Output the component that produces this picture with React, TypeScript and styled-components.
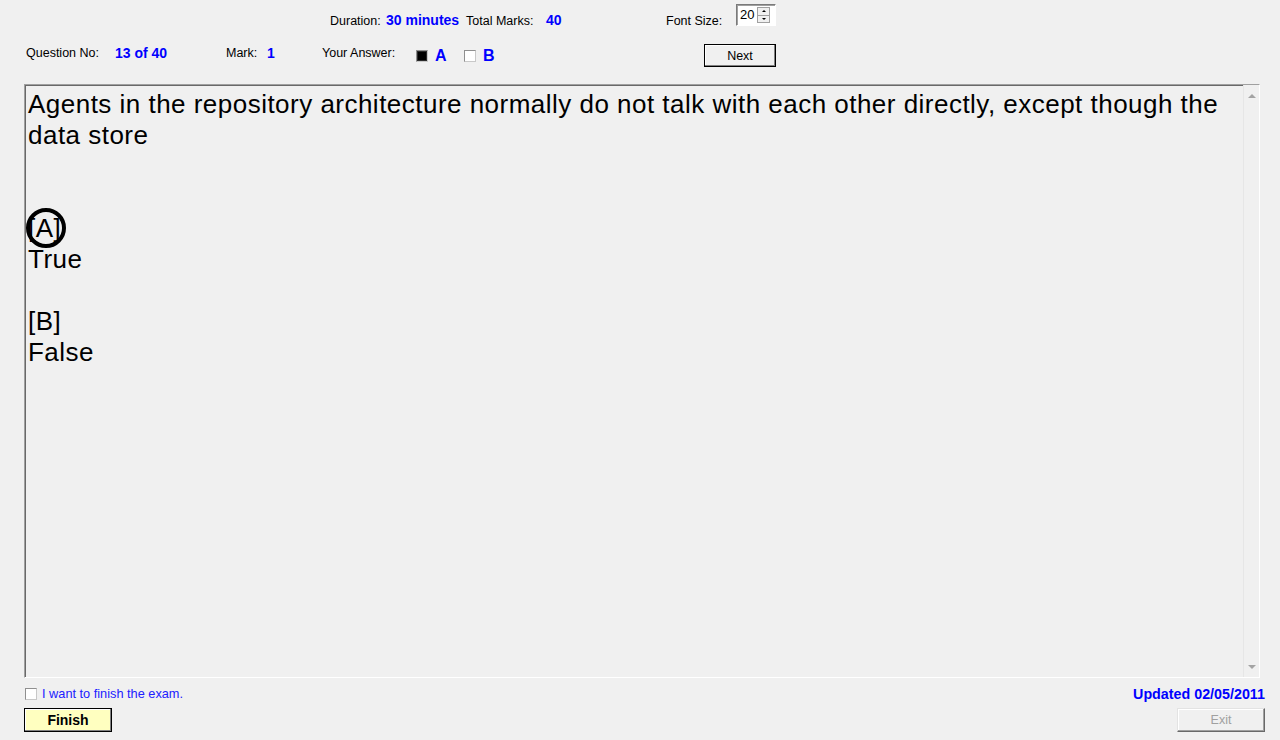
import React from 'react';
import styled, { createGlobalStyle } from 'styled-components';

const Global = createGlobalStyle`
  html, body { margin: 0; padding: 0; background: #f0f0f0; }
  body { font-family: "Liberation Sans", Arial, sans-serif; color: #000; }
`;

const Window = styled.div`
  width: 1280px;
  height: 740px;
  background: #f0f0f0;
  display: flex;
  flex-direction: column;
  overflow: hidden;
`;

const HeaderRow = styled.div<{ $top: number; $left: number; $h: number }>`
  display: flex;
  align-items: flex-start;
  margin-top: ${p => p.$top}px;
  padding-left: ${p => p.$left}px;
  height: ${p => p.$h}px;
`;

const Label = styled.div<{ $w?: number; $pt?: number }>`
  ${p => (p.$w ? `width: ${p.$w}px;` : '')}
  flex: none;
  padding-top: ${p => p.$pt ?? 0}px;
  font-size: 12.5px;
  line-height: 14px;
  white-space: nowrap;
  color: #000;
`;

const Value = styled.div<{ $w?: number; $pt?: number; $size?: number }>`
  ${p => (p.$w ? `width: ${p.$w}px;` : '')}
  flex: none;
  padding-top: ${p => p.$pt ?? 0}px;
  font-size: ${p => p.$size ?? 14}px;
  line-height: 16px;
  font-weight: bold;
  white-space: nowrap;
  color: #0000ff;
`;

const CheckBox = styled.div<{ $checked?: boolean; $mt?: number; $mr?: number; $ml?: number }>`
  flex: none;
  box-sizing: border-box;
  width: 12px;
  height: 12px;
  margin-top: ${p => p.$mt ?? 0}px;
  margin-right: ${p => p.$mr ?? 0}px;
  margin-left: ${p => p.$ml ?? 0}px;
  border: 1px solid #8f8f8f;
  border-bottom-color: #c8c8c8;
  border-right-color: #c8c8c8;
  background: ${p => (p.$checked ? '#000' : '#fff')};
  box-shadow: ${p => (p.$checked ? 'inset 0 0 0 1px #2a2a2a' : 'none')};
`;

const Spinner = styled.div`
  flex: none;
  box-sizing: border-box;
  width: 40px;
  height: 22px;
  display: flex;
  align-items: stretch;
  background: #fff;
  border-top: 1px solid #7a7a7a;
  border-left: 1px solid #7a7a7a;
  border-right: 1px solid #ffffff;
  border-bottom: 1px solid #ffffff;
  box-shadow: inset 1px 1px 0 #a0a0a0;
  padding: 2px 5px 2px 2px;
`;

const SpinnerText = styled.div`
  flex: 1;
  font-size: 13px;
  line-height: 16px;
  padding-left: 1px;
`;

const SpinnerButtons = styled.div`
  width: 13px;
  display: flex;
  flex-direction: column;
  border: 1px solid #a0a0a0;
  box-sizing: border-box;
`;

const SpinButton = styled.div<{ $top?: boolean }>`
  flex: 1;
  box-sizing: border-box;
  background: #f0f0f0;
  ${p => (p.$top ? 'border-bottom: 1px solid #a0a0a0;' : '')}
  display: flex;
  align-items: center;
  justify-content: center;
`;

const Arrow = styled.div<{ $dir: 'up' | 'down'; $color?: string; $size?: number }>`
  width: 0;
  height: 0;
  border-left: ${p => p.$size ?? 2}px solid transparent;
  border-right: ${p => p.$size ?? 2}px solid transparent;
  ${p =>
    p.$dir === 'up'
      ? `border-bottom: ${(p.$size ?? 2)}px solid ${p.$color ?? '#000'};`
      : `border-top: ${(p.$size ?? 2)}px solid ${p.$color ?? '#000'};`}
`;

const PushButton = styled.div<{ $w: number; $h: number; $bg?: string; $bold?: boolean; $disabled?: boolean; $size?: number }>`
  flex: none;
  box-sizing: border-box;
  width: ${p => p.$w}px;
  height: ${p => p.$h}px;
  display: flex;
  align-items: center;
  justify-content: center;
  background: ${p => p.$bg ?? '#f0f0f0'};
  font-size: ${p => p.$size ?? 12.5}px;
  font-weight: ${p => (p.$bold ? 'bold' : 'normal')};
  color: ${p => (p.$disabled ? '#a0a0a0' : '#000')};
  ${p =>
    p.$disabled
      ? `border-top: 1px solid #e3e3e3; border-left: 1px solid #e3e3e3;
         border-right: 1px solid #696969; border-bottom: 1px solid #696969;
         box-shadow: inset -1px -1px 0 #a0a0a0, inset 1px 1px 0 #fff;`
      : `border: 1px solid #000;
         box-shadow: inset -1px -1px 0 #808080, inset 1px 1px 0 #fff;`}
`;

const QuestionPanel = styled.div`
  flex: none;
  box-sizing: border-box;
  margin: 17px 0 0 24px;
  width: 1236px;
  height: 594px;
  display: flex;
  border-top: 1px solid #a0a0a0;
  border-left: 1px solid #a0a0a0;
  border-right: 1px solid #fff;
  border-bottom: 1px solid #fff;
  box-shadow: inset 1px 1px 0 #696969;
`;

const QuestionText = styled.div`
  flex: 1;
  padding: 4px 0 0 3px;
  font-size: 26px;
  letter-spacing: 0.48px;
  line-height: 31px;
  color: #000;
`;

const Line = styled.div`
  min-height: 31px;
  white-space: nowrap;
`;

const Choice = styled.span`
  position: relative;
  display: inline-block;
`;

const AnswerRing = styled.span`
  position: absolute;
  left: -2px;
  top: -5px;
  width: 40px;
  height: 40px;
  box-sizing: border-box;
  border: 4px solid #000;
  border-radius: 50%;
`;

const ScrollBar = styled.div`
  width: 15px;
  flex: none;
  display: flex;
  flex-direction: column;
  justify-content: space-between;
  align-items: center;
  border-left: 1px solid #e6e6e6;
  background: #f0f0f0;
  padding: 9px 0 8px;
`;

const BottomBar = styled.div`
  display: flex;
  justify-content: space-between;
  margin-top: 8px;
  padding: 0 15px 0 24px;
`;

const BottomLeft = styled.div`
  display: flex;
  flex-direction: column;
  align-items: flex-start;
  padding-top: 1px;
`;

const FinishRow = styled.div`
  display: flex;
  align-items: flex-start;
  height: 14px;
`;

const FinishLabel = styled.div`
  font-size: 12.75px;
  line-height: 14px;
  color: #2020ff;
  white-space: nowrap;
`;

const BottomRight = styled.div`
  display: flex;
  flex-direction: column;
  align-items: flex-end;
`;

const UpdatedText = styled(Value)`
  font-size: 14.3px;
`;

const ButtonSlot = styled.div<{ $mt: number }>`
  margin-top: ${p => p.$mt}px;
`;

export default function App() {
  return (
    <Window>
      <Global />
      <HeaderRow $top={4} $left={330} $h={22}>
        <Label $w={56} $pt={10}>Duration:</Label>
        <Value $w={80} $pt={8}>30 minutes</Value>
        <Label $w={80} $pt={10}>Total Marks:</Label>
        <Value $w={120} $pt={8}>40</Value>
        <Label $w={70} $pt={10}>Font Size:</Label>
        <Spinner>
          <SpinnerText>20</SpinnerText>
          <SpinnerButtons>
            <SpinButton $top><Arrow $dir="up" /></SpinButton>
            <SpinButton><Arrow $dir="down" /></SpinButton>
          </SpinnerButtons>
        </Spinner>
      </HeaderRow>

      <HeaderRow $top={18} $left={26} $h={23}>
        <Label $w={89} $pt={2}>Question No:</Label>
        <Value $w={111} $pt={1}>13 of 40</Value>
        <Label $w={41} $pt={2}>Mark:</Label>
        <Value $w={55} $pt={1}>1</Value>
        <Label $w={94} $pt={2}>Your Answer:</Label>
        <CheckBox $checked $mt={6} $mr={7} />
        <Value $w={29} $pt={4} $size={16}>A</Value>
        <CheckBox $mt={6} $mr={7} />
        <Value $w={221} $pt={4} $size={16}>B</Value>
        <PushButton $w={72} $h={23}>Next</PushButton>
      </HeaderRow>

      <QuestionPanel>
        <QuestionText>
          <Line>Agents in the repository architecture normally do not talk with each other directly, except though the</Line>
          <Line>data store</Line>
          <Line />
          <Line />
          <Line>
            <Choice>
              [A]
              <AnswerRing />
            </Choice>
          </Line>
          <Line>True</Line>
          <Line />
          <Line>[B]</Line>
          <Line>False</Line>
        </QuestionText>
        <ScrollBar>
          <Arrow $dir="up" $color="#a3a3a3" $size={4} />
          <Arrow $dir="down" $color="#a3a3a3" $size={4} />
        </ScrollBar>
      </QuestionPanel>

      <BottomBar>
        <BottomLeft>
          <FinishRow>
            <CheckBox $mt={1} $ml={1} $mr={5} />
            <FinishLabel>I want to finish the exam.</FinishLabel>
          </FinishRow>
          <ButtonSlot $mt={7}>
            <PushButton $w={88} $h={24} $bg="#ffffc0" $bold $size={14}>Finish</PushButton>
          </ButtonSlot>
        </BottomLeft>
        <BottomRight>
          <UpdatedText>Updated 02/05/2011</UpdatedText>
          <ButtonSlot $mt={6}>
            <PushButton $w={88} $h={24} $disabled>Exit</PushButton>
          </ButtonSlot>
        </BottomRight>
      </BottomBar>
    </Window>
  );
}
